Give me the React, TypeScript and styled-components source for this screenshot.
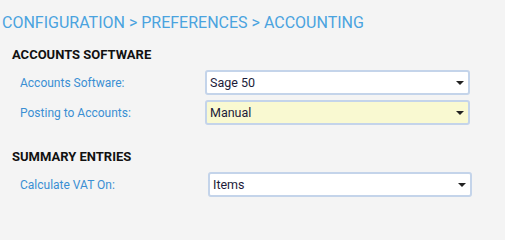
import React from "react";
import styled, { createGlobalStyle } from "styled-components";

const GlobalStyle = createGlobalStyle`
  html, body {
    margin: 0;
    padding: 0;
    background: #f4f4f4;
    font-family: Roboto, "Liberation Sans", Arial, sans-serif;
  }
`;

const Page = styled.div`
  width: 505px;
  height: 230px;
  background: #f4f4f4;
  padding: 11px 0 0 2px;
  box-sizing: border-box;
`;

const Breadcrumb = styled.h1`
  margin: 0;
  font-size: 16px;
  font-weight: 400;
  line-height: 24px;
  color: #4aa3df;
`;

const Section = styled.section`
  margin-top: 12px;
  padding-left: 10px;
  & + & {
    margin-top: 24px;
  }
`;

const SectionTitle = styled.h2`
  margin: 0 0 8px;
  font-size: 13px;
  font-weight: 700;
  line-height: 15px;
  color: #111;
`;

const Rows = styled.div`
  display: flex;
  flex-direction: column;
  gap: 5px;
  padding-left: 8px;
`;

const Row = styled.div<{ $labelWidth: number; $selectWidth: number }>`
  display: grid;
  grid-template-columns: ${(p) => p.$labelWidth}px ${(p) => p.$selectWidth}px;
  align-items: center;
`;

const Label = styled.label`
  font-size: 12px;
  color: #3a8fd3;
`;

const SelectBox = styled.div<{ $highlight?: boolean }>`
  position: relative;
  height: 25px;
  box-sizing: border-box;
  border: 2px solid #c4d4ea;
  border-radius: 3px;
  background: ${(p) => (p.$highlight ? "#f9f9d1" : "#ffffff")};
  display: flex;
  align-items: center;
  padding: 0 20px 0 3px;
  font-size: 12.5px;
  color: #1c1c3a;
`;

const Caret = styled.span`
  position: absolute;
  right: 4px;
  top: 50%;
  margin-top: -2px;
  width: 0;
  height: 0;
  border-left: 4px solid transparent;
  border-right: 4px solid transparent;
  border-top: 4px solid #222;
`;

interface FieldProps {
  label: string;
  value: string;
  highlight?: boolean;
  labelWidth?: number;
  selectWidth?: number;
}

const Field: React.FC<FieldProps> = ({ label, value, highlight, labelWidth = 185, selectWidth = 265 }) => (
  <Row $labelWidth={labelWidth} $selectWidth={selectWidth}>
    <Label>{label}</Label>
    <SelectBox $highlight={highlight}>
      {value}
      <Caret />
    </SelectBox>
  </Row>
);

const App: React.FC = () => (
  <>
    <GlobalStyle />
    <Page>
      <Breadcrumb>CONFIGURATION &gt; PREFERENCES &gt; ACCOUNTING</Breadcrumb>
      <Section>
        <SectionTitle>ACCOUNTS SOFTWARE</SectionTitle>
        <Rows>
          <Field label="Accounts Software:" value="Sage 50" />
          <Field label="Posting to Accounts:" value="Manual" highlight />
        </Rows>
      </Section>
      <Section>
        <SectionTitle>SUMMARY ENTRIES</SectionTitle>
        <Rows>
          <Field label="Calculate VAT On:" value="Items" labelWidth={188} selectWidth={264} />
        </Rows>
      </Section>
    </Page>
  </>
);

export default App;
